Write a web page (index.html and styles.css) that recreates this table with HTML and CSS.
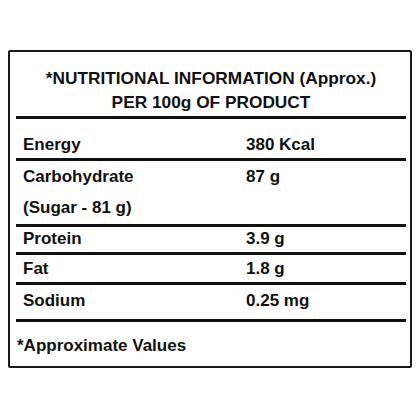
FILE: index.html
```html
<!DOCTYPE html>
<html>
<head>
<meta charset="utf-8">
<link rel="stylesheet" href="styles.css">
</head>
<body>
<div class="panel">
  <div class="head">
    <div>*NUTRITIONAL INFORMATION (Approx.)</div>
    <div>PER 100g OF PRODUCT</div>
  </div>
  <div class="row r-energy"><span>Energy</span><span>380 Kcal</span></div>
  <div class="row r-carb">
    <span>Carbohydrate</span><span>87 g</span>
    <span class="sub">(Sugar - 81 g)</span><span></span>
  </div>
  <div class="row r-protein"><span>Protein</span><span>3.9 g</span></div>
  <div class="row r-fat"><span>Fat</span><span>1.8 g</span></div>
  <div class="row r-sodium"><span>Sodium</span><span>0.25 mg</span></div>
  <div class="foot">*Approximate Values</div>
</div>
</body>
</html>
```
FILE: styles.css
```css
html, body {
  margin: 0;
  padding: 0;
  background: #fff;
}
body {
  font-family: "Liberation Sans", Arial, sans-serif;
  font-weight: bold;
  font-size: 17px;
  color: #111;
}
.panel {
  box-sizing: border-box;
  margin: 50px 0 0 8px;
  width: 404px;
  border: 2px solid #1a1a1a;
  border-radius: 2px;
  padding: 0 4px 0 6px;
}
.head {
  text-align: center;
  font-size: 17.3px;
  line-height: 24px;
  padding: 14px 0 2px;
  border-bottom: 3px solid #111;
}
.row {
  display: grid;
  grid-template-columns: 223px 1fr;
  padding-left: 7px;
  line-height: 20px;
  border-bottom: 3px solid #111;
}
.r-energy { padding-top: 16px; padding-bottom: 3px; }
.r-carb { padding-top: 6px; padding-bottom: 6px; row-gap: 11px; }
.r-protein { padding-top: 2px; padding-bottom: 3px; }
.r-fat { padding-top: 4px; padding-bottom: 3px; }
.r-sodium { padding-top: 6px; padding-bottom: 8px; }
.foot {
  padding: 14px 0 10px 1px;
  line-height: 20px;
}
```
